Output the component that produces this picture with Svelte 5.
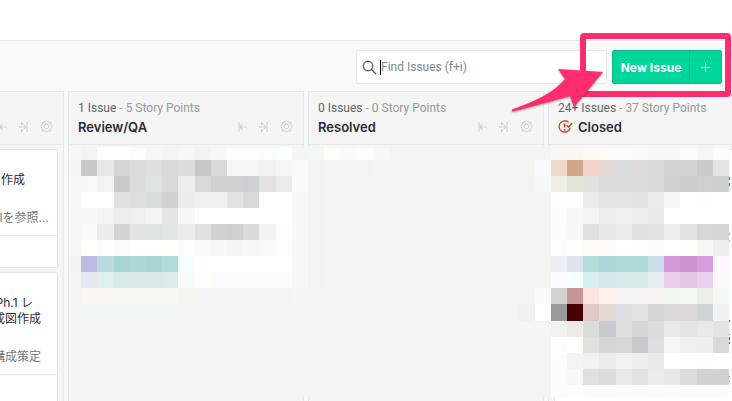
<script>
  const columns = [
    { title: "", issues: "", points: "", cards: [
      { title: [["作成", "far"]], repo: ["PIを参照...", "near"] },
      { title: [["Ph.1 レ", "wide"], ["成図作成", "mid"]], repo: ["構成策定", "mid"] },
    ] },
    { title: "Review/QA", issues: "1 Issue", points: "5 Story Points", cards: [] },
    { title: "Resolved", issues: "0 Issues", points: "0 Story Points", cards: [] },
    { title: "Closed", issues: "24+ Issues", points: "37 Story Points", closed: true, cards: [] },
  ];

  // [row, first cell, colours]; two digits are a grey, six a full colour
  const mosaic = [
    [0, 0, "f7 f4 ff ff fd f7 f5 f7 f2 f8 fd fd fc fbfffd f5 f3f7f5 fdfdf8 fa fc f7 f4 f4 f4 f4 f4"],
    [1, 0, "f5 c8 e7 d5 db df d8 dc c6 d9 f6 f6 f2 f6 f9 f3 f4 f4 f4"],
    [2, 0, "f8 f9 f3 ca db e0e3e2 d9 ed d8 d1 d1 ced1d1 e1 ea f9 f3"],
    [3, 0, "f8 ff ff e0 de d9dcda d1 ec f0 f0 e2 d9 ff ff f8 f3"],
    [4, 0, "f7 f8 f4 ee f0 f5 e5 f8 ff ff ff ff ff ff f8 f3"],
    [5, 0, "f7 fa ec d4 e3 e1e3e2 e3e5e4 ea e0 d1 d0 da f2 fd f8 f3"],
    [6, 0, "f7 fffffb fd fdfafb ff ff fffffc fc f9 f7 f5 f7 f9 fc f7 f3"],
    [7, 0, "f2f2f5 bdbbe6 b9dbe0 a7d3d0 acd7d6 a9d4d4 b0dadb f5ffff ff ff ff ff ff ff f8 f3"],
    [8, 0, "f3f5f5 e7e7f3 dfeeee d9ebe8 dbebea d9eae8 dcecec f8fbfa fcfcf8 fb fb fb fb fb f7 f3"],
    [9, 0, "f3f4f4 f8f7f4 f8f7f4 f8f7f4 f8f7f4 f8f7f4 f8f7f4 f4f4f1 f4 f4 f4 f4 f4 f4"],
    [10, 1, "f3f4f4 f3f5f4 f3f5f4 f3f5f4 f3f5f4 f3f5f4"],
    [0, 29, "f3f5f5 f8f8f5 fff5f0 fff7f2 fffaf5 fb f9f9f6 f8 f8 fb f6 fb"],
    [1, 28, "f4f4f1 f6fbff efd8cc d2a68b f3d5cc e7d8d5 dadcde dddbdc d9 d4 d4 cb e4"],
    [2, 28, "f4f4f1 f5f8f7 efefe5 e1e3d4 e0e0dc dadddc dd db d9 d1 cd cf cccfce"],
    [3, 29, "f4 fcffff ff ec e6 e5 e1e3e2 eb f7f9f8 ff fe ff"],
    [4, 29, "f4 fb f6 f4f4f0 ebeeed f0 ee e9e9eb ff ff ff ff"],
    [5, 29, "f4 fb f8 e0 e7e9e8 eb e0 e1 edf0ef e3 d7 d5"],
    [6, 29, "f4 fc fffefb fff9f7 fffaf8 ff fffcfa fdfafc ff fbfff8 f5f8f5 ef"],
    [7, 29, "f4f4f1 eeeef5 dee4ef b0dcd9 aed7da b0dad9 a9dbd7 cadce7 d798da cc92d0 d69bdc fff5ff"],
    [8, 29, "f4f4f1 fbfbff f6ffff d7efee d4e9eb d9eaea d5ebe9 e4edf2 e8cce9 e4c9e7 ebd0ed fbf7fd"],
    [9, 28, "f4 fa d2d2cf c69696 ffe3df fff2ed f4f2f4 f8f4f6 f5f4f3 f2f6f0 f5faf4 ebf0e9 f5f7f6"],
    [10, 28, "f1 ff 9b9999 480006 dec9c3 e6dad6 dddfe4 e2 d6 dcd7d9 dad8d9 d2d3d5 f1"],
    [11, 29, "f5 f0f3f2 eee8e8 daddda c9cacf df d6 dc e9 e5e5e3 e9 e3e3e1"],
    [12, 29, "f4 fd ff e1e0de d5 d7 cacacd dddfe2 f7 f0 ef d9"],
    [13, 29, "f4 fb f4 f2 ec f0f3f2 ef e9 ff ff fe ff"],
    [14, 29, "f4 fb f8 e0 dc e9e9e7 e1 ec e8 db d1 d1"],
    [15, 29, "f4 fb fd fc fb fc fc fb fc fb fb fc"],
  ];

  const lefts = Array.from({ length: 42 }, (_, i) => Math.round((664 * i) / 41));
  const tops = [0, ...Array.from({ length: 15 }, (_, i) => Math.round(13 + 16.05 * i)), 250];

  const cells = mosaic.flatMap(([row, start, colours]) =>
    colours.split(" ").map((c, i) => {
      const col = start + i;
      const x = col === 0 ? 6 : lefts[col];
      return {
        x,
        y: tops[row],
        width: lefts[col + 1] - x,
        height: tops[row + 1] - tops[row],
        fill: "#" + (c.length === 2 ? c.repeat(3) : c),
      };
    })
  );

  let query = "";
</script>

<main>
  <div class="topbar"></div>

  <div class="toolbar">
    <label class="search">
      <svg width="15" height="15" viewBox="0 0 15 15" aria-hidden="true">
        <circle cx="6" cy="6" r="4.7" />
        <path d="M9.5 9.5L14 14" />
      </svg>
      <span class="caret"></span>
      <input type="text" placeholder="Find Issues (f+i)" aria-label="Find Issues" bind:value={query} />
    </label>
    <div class="new-issue">
      <button type="button">New Issue</button>
      <button type="button" class="plus" aria-label="Add">
        <svg width="9" height="9" viewBox="0 0 9 9"><path d="M4.5 0v9M0 4.5h9" /></svg>
      </button>
    </div>
  </div>

  <div class="board">
    {#each columns as column}
      <section class="column">
        <header>
          <div class="stats">
            {#if column.issues}
              <span>{column.issues}</span> - {column.points}
            {/if}
          </div>
          <div class="heading">
            {#if column.closed}
              <svg class="closed" width="15" height="14" viewBox="0 0 15 14" aria-hidden="true">
                <path d="M10.6 2.2A5.7 5.7 0 1 0 12.3 8" />
                <path d="M6.6 3.5v4M6.6 9v1.6" stroke-width="1.8" />
                <path d="M8.7 5.1l2 2 3.5-4.1" stroke-width="1.5" />
              </svg>
            {/if}
            <h2>{column.title}</h2>
            {#if !column.closed}
              <div class="actions">
                <button type="button" aria-label="Collapse">
                  <svg width="9" height="10" viewBox="0 0 9 10">
                    <path d="M1 0v10M9 5H2M5 2L2 5l3 3" />
                    <path d="M2 3v4M3 4v2" />
                  </svg>
                </button>
                <button type="button" aria-label="Move">
                  <svg width="9" height="10" viewBox="0 0 9 10">
                    <path d="M0 5h7M3 1l4 4-4 4M2.5 0v3M2.5 7v3M8 0v10" />
                  </svg>
                </button>
                <button type="button" aria-label="Settings">
                  <svg width="13" height="13" viewBox="0 0 13 13">
                    <path d="M6.5.5l1.5 1.7 2.7-.1.1 2.6 1.7 1.8-1.7 1.8-.1 2.6-2.7-.1-1.5 1.7-1.5-1.7-2.7.1-.1-2.6L.5 6.5l1.7-1.8.1-2.6 2.7.1z" />
                    <circle cx="6.5" cy="6.5" r="2.4" />
                  </svg>
                </button>
              </div>
            {/if}
          </div>
        </header>
        <div class="cards">
          {#each column.cards as card}
            <article>
              <div class="body">
                <h3>
                  {#each card.title as [text, trail]}
                    <span class={trail}>{text}</span>
                  {/each}
                </h3>
                <p class={card.repo[1]}>{card.repo[0]}</p>
              </div>
              <footer></footer>
            </article>
          {/each}
          {#if column.closed}
            <article class="tall"></article>
          {/if}
        </div>
      </section>
    {/each}
  </div>

  <svg class="mosaic" width="667" height="250" viewBox="0 0 667 250" shape-rendering="crispEdges" aria-hidden="true">
    <rect x="6" width="658" height="250" fill="#f5f5f5" />
    {#each cells as cell}
      <rect {...cell} />
    {/each}
    <path d="M664 30h1v3h-1zM664 36h1v3h-1z" fill="#8a5560" />
    <path d="M664 86h1v2h-1zM664 93h1v2h-1z" fill="#d0a890" />
    <path d="M664 173h1v2h-1zM664 187h1v1h-1zM664 190h1v3h-1zM664 195h1v2h-1z" fill="#56637d" />
    <path d="M664 229h1v1h-1zM664 234h1v1h-1z" fill="#c97f63" />
  </svg>

  <svg class="callout" width="232" height="120" viewBox="500 0 232 120" aria-hidden="true">
    <rect x="583" y="36" width="145" height="58" rx="1" />
    <path d="M512.5 109.2C535 101 552 94 565 79L558 69L603 72L574 107L570 96C552 101 534 106 513 111.5Q511 111 512.5 109.2Z" />
  </svg>
</main>

<style>
  :global(body) {
    margin: 0;
    background: #f9f9f9;
    font-family: Inter, "Noto Sans CJK JP", sans-serif;
    font-size: 12px;
    color: #2b2b33;
  }

  main {
    position: relative;
    display: flex;
    flex-direction: column;
    height: 100vh;
    overflow: hidden;
  }

  .topbar {
    flex: none;
    height: 40px;
    background: #fff;
    border-bottom: 1px solid #e8e8e8;
  }

  .toolbar {
    flex: none;
    display: flex;
    justify-content: flex-end;
    gap: 5px;
    padding: 9px 10px 7px;
  }

  .search {
    box-sizing: border-box;
    display: flex;
    align-items: center;
    width: 251px;
    height: 34px;
    padding: 0 5px;
    background: #fff;
    border: 1px solid #e8e8e8;
    border-radius: 2px;
  }

  .search svg {
    fill: none;
    stroke: #62626e;
    stroke-width: 1.4;
  }

  .caret {
    width: 1px;
    height: 15px;
    margin-left: 3px;
    background: #000;
  }

  input {
    flex: 1;
    min-width: 0;
    padding: 0;
    border: 0;
    outline: 0;
    background: none;
    font: 12px Roboto, "Noto Sans CJK JP", sans-serif;
    color: inherit;
  }

  input::placeholder {
    color: #85858a;
    opacity: 1;
  }

  button {
    display: flex;
    align-items: center;
    justify-content: center;
    padding: 0;
    border: 0;
    background: none;
    font: inherit;
  }

  .new-issue {
    box-sizing: border-box;
    display: flex;
    width: 110px;
    height: 34px;
    background: #00d59b;
    border: 1px solid #12b886;
    border-radius: 2px;
  }

  .new-issue button {
    flex: 1;
    color: #fff;
    font-weight: 700;
    white-space: nowrap;
  }

  .new-issue .plus {
    flex: none;
    width: 32px;
    border-left: 1px solid #12b886;
  }

  .plus svg {
    stroke: #fff;
  }

  .board {
    flex: 1;
    display: flex;
    gap: 4px;
    min-height: 0;
    margin-left: -172px;
  }

  .column {
    box-sizing: border-box;
    flex: none;
    width: 236px;
    background: #f5f5f5;
    border: 1px solid #e8e8e8;
    border-bottom: 0;
  }

  header {
    box-sizing: border-box;
    height: 53px;
    padding: 8px 10px 0 9px;
    border-bottom: 1px solid #e8e8e8;
  }

  .stats {
    height: 17px;
    font-family: Roboto, sans-serif;
    line-height: 17px;
    color: #999;
    white-space: nowrap;
  }

  .stats span {
    color: #666;
  }

  .heading {
    display: flex;
    align-items: center;
    height: 19px;
  }

  .closed {
    margin-right: 5px;
    fill: none;
    stroke: #c8441f;
    stroke-width: 1.3;
  }

  h2 {
    margin: 0;
    font-size: 13px;
    font-weight: 600;
  }

  .actions {
    display: flex;
    align-items: center;
    gap: 12px;
    margin-left: auto;
  }

  .actions svg {
    fill: none;
    stroke: #cfcfcf;
  }

  .cards {
    display: flex;
    flex-direction: column;
    gap: 4px;
    padding: 4px 5px;
  }

  article {
    background: #fff;
    border: 1px solid #e5e5e5;
    border-radius: 2px;
    text-align: right;
  }

  .tall {
    height: 400px;
  }

  .body {
    padding: 22px 0 7px;
    border-bottom: 1px solid #e8e8e8;
  }

  h3 {
    margin: 0 0 20px;
    font-size: 12px;
    font-weight: 400;
    line-height: 16px;
  }

  h3 span {
    display: block;
  }

  p {
    margin: 0;
    font-size: 12px;
    line-height: 20px;
    color: #777;
  }

  .near {
    padding-right: 8px;
  }

  .mid {
    padding-right: 16px;
  }

  .wide {
    padding-right: 24px;
  }

  .far {
    padding-right: 32px;
  }

  footer {
    height: 31px;
  }

  .mosaic {
    position: absolute;
    top: 147px;
    left: 65px;
  }

  .callout {
    position: absolute;
    top: 0;
    right: 0;
    pointer-events: none;
  }

  .callout rect {
    fill: none;
    stroke: #ff2d6f;
    stroke-width: 6;
  }

  .callout path {
    fill: #ff2d6f;
    filter: drop-shadow(0 1px 1px rgba(0, 0, 0, 0.4));
  }
</style>
